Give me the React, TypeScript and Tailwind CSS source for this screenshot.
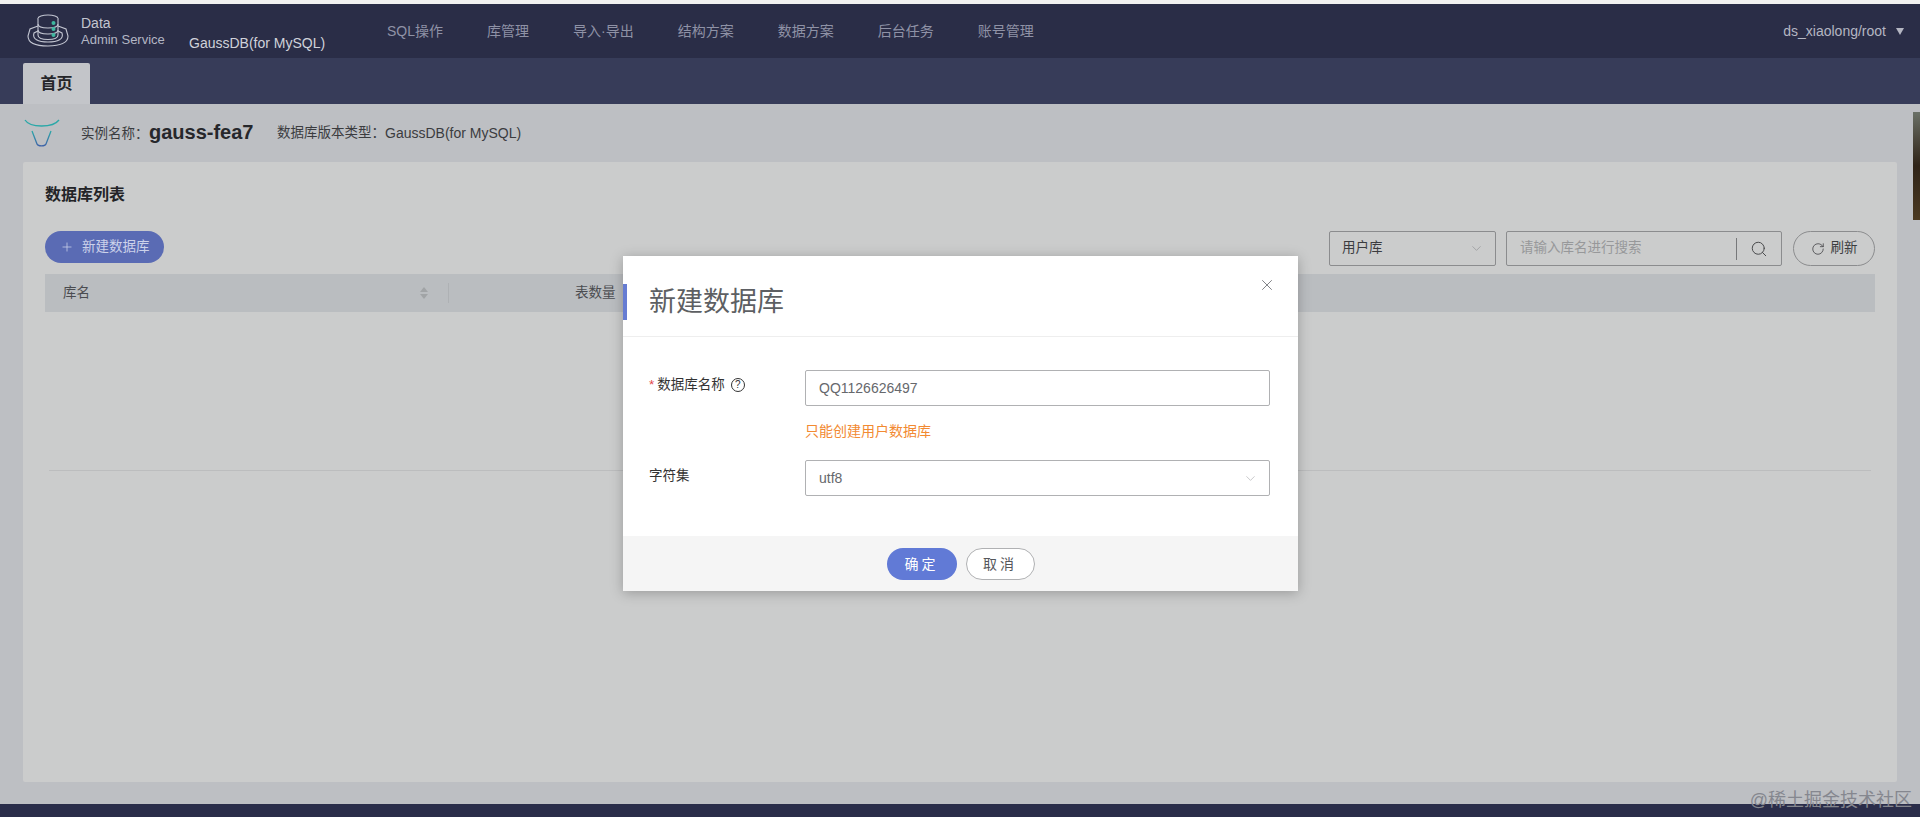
import React from 'react';
import { ChevronDown, Plus, RotateCw, Search, X } from 'lucide-react';

const navItems = ['SQL操作', '库管理', '导入·导出', '结构方案', '数据方案', '后台任务', '账号管理'];

const DbLogo: React.FC = () => (
  <svg width="42" height="34" viewBox="0 0 42 34" fill="none" stroke="#c3c6d2" strokeWidth="1.1">
    <path d="M11 12 L3 15 L1 22 C1 29 9 32 21 32 C33 32 41 29 41 22 L39 15 L31 12" />
    <path d="M11 17 L7 19 C5 25 11 28 21 28 C31 28 37 25 35 19 L31 17" />
    <ellipse cx="21" cy="4.5" rx="10" ry="3.5" fill="#2a2d47" />
    <path d="M11 4.5 V21 C11 24 15 25.5 21 25.5 C27 25.5 31 24 31 21 V4.5" fill="#2a2d47" />
    <path d="M11 10 C11 13 15 14 21 14 C27 14 31 13 31 10" />
    <path d="M11 16 C11 19 15 20 21 20 C27 20 31 19 31 16" />
    <circle cx="26.5" cy="9" r="2" fill="#3fb8a0" stroke="none" />
    <circle cx="26.5" cy="15" r="2" fill="#3fb8a0" stroke="none" />
    <circle cx="26.5" cy="21" r="2" fill="#3fb8a0" stroke="none" />
  </svg>
);

const BullLogo: React.FC = () => (
  <svg width="36" height="28" viewBox="0 0 36 28" fill="none" strokeWidth="1.3">
    <defs>
      <linearGradient id="bull" x1="0" y1="0" x2="0" y2="1">
        <stop offset="0" stopColor="#2aa8a8" />
        <stop offset="1" stopColor="#3f63a8" />
      </linearGradient>
    </defs>
    <path d="M1 1 C6 9 29 9 35 1" stroke="#2aa8a8" />
    <path d="M8 12 L13 25 C14 27.5 21 27.5 22 25 L27 12" stroke="url(#bull)" />
  </svg>
);

const App: React.FC = () => {
  return (
    <div className="relative flex h-[817px] w-[1920px] flex-col overflow-hidden bg-[#bdbfc3] font-['Liberation_Sans','Noto_Sans_CJK_SC',sans-serif] text-[13px] text-[#3b3c3f]">
      <div className="h-[4px] bg-[#f1f1f1]" />

      {/* top nav */}
      <header className="flex h-[54px] items-center bg-[#2a2d47] pl-[27px] pr-[16px]">
        <DbLogo />
        <div className="ml-[12px] mt-[-1px] w-[108px]">
          <div className="text-[14px] font-medium leading-[17px] text-[#c4c6d0]">Data</div>
          <div className="text-[13px] leading-[15px] text-[#b3b6c4]">Admin Service</div>
        </div>
        <div className="mt-[24px] w-[198px] text-[14px] leading-[16px] text-[#d0d2da]">GaussDB(for MySQL)</div>
        <nav className="flex gap-[44px] text-[14px] text-[#8f92a6]">
          {navItems.map((item) => (
            <span key={item}>{item}</span>
          ))}
        </nav>
        <div className="ml-auto flex items-center gap-[10px] text-[14px] text-[#b4b6c2]">
          <span>ds_xiaolong/root</span>
          <span className="h-0 w-0 border-x-[4.5px] border-t-[7px] border-x-transparent border-t-[#b4b6c2]" />
        </div>
      </header>

      {/* tab bar */}
      <div className="flex h-[46px] items-end bg-[#373c59] pl-[23px]">
        <div className="flex h-[41px] w-[67px] items-center justify-center rounded-t-[2px] bg-[#c3c5c9] text-[16px] font-bold text-[#25262a]">
          首页
        </div>
      </div>

      {/* instance info */}
      <div className="flex h-[58px] items-center pl-[24px]">
        <BullLogo />
        <span className="ml-[21px] mt-[2px] w-[68px] text-[13.5px]">实例名称：</span>
        <span className="mt-[-3px] w-[128px] text-[20px] font-bold text-[#26272b]">gauss-fea7</span>
        <span className="text-[13.5px]">数据库版本类型：</span>
        <span className="text-[14px]">GaussDB(for MySQL)</span>
      </div>

      {/* list card */}
      <main className="mx-[23px] flex h-[620px] flex-col rounded-[2px] bg-[#cbcccc] px-[22px]">
        <h2 className="mt-[23px] text-[16px] font-bold leading-[20px] text-[#232427]">数据库列表</h2>
        <div className="mt-[26px] flex items-start">
          <button className="flex h-[32px] w-[119px] items-center rounded-full bg-[#5a6bb4] pl-[15px] text-[13.5px] text-[#ccd2ea]">
            <Plus size={14} strokeWidth={1.3} className="mr-[8px]" />
            新建数据库
          </button>
          <div className="ml-auto flex h-[35px] w-[167px] items-center justify-between rounded-[2px] border border-[#8b8c8e] pl-[12px] pr-[11px] text-[13.5px]">
            用户库
            <ChevronDown size={15} strokeWidth={1} className="text-[#8b8c8e]" />
          </div>
          <div className="ml-[10px] flex h-[35px] w-[276px] items-center rounded-[2px] border border-[#8b8c8e] pl-[13px] text-[13.5px] text-[#97989a]">
            <span className="flex-1">请输入库名进行搜索</span>
            <span className="h-[22px] w-px bg-[#77787a]" />
            <Search size={18} strokeWidth={1.3} className="mx-[13px] text-[#47484a]" />
          </div>
          <button className="ml-[11px] flex h-[35px] w-[82px] items-center justify-center gap-[6px] rounded-full border border-[#8b8c8e] text-[13.5px]">
            <RotateCw size={14} strokeWidth={1.3} />
            刷新
          </button>
        </div>

        <div className="mt-[8px] flex h-[38px] items-center bg-[#babdc0] pl-[18px] text-[13.5px] text-[#4a4c50]">
          <span className="w-[357px]">库名</span>
          <span className="flex flex-col gap-[2px]">
            <span className="h-0 w-0 border-x-[4px] border-b-[5px] border-x-transparent border-b-[#a1a4a6]" />
            <span className="h-0 w-0 border-x-[4px] border-t-[5px] border-x-transparent border-t-[#a1a4a6]" />
          </span>
          <span className="ml-[20px] h-[20px] w-px bg-[#aeb1b4]" />
          <span className="ml-[126px]">表数量</span>
        </div>

        <div className="mx-[4px] mt-[158px] h-px bg-[#bcbdbe]" />
      </main>

      <div className="flex-1" />
      <footer className="h-[13px] bg-[#2a2d4a]" />

      {/* sliver of a photo at the right edge */}
      <div className="absolute right-0 top-[112px] h-[108px] w-[7px] bg-gradient-to-b from-[#6b7168] via-[#2f2418] to-[#4c3a22]" />

      {/* dialog */}
      <div className="absolute left-[623px] top-[256px] flex h-[335px] w-[675px] flex-col bg-white shadow-[0_2px_12px_rgba(0,0,0,0.25)]">
        <div className="relative flex h-[81px] items-center border-b border-[#eeeeee] pl-[26px] pt-[11px]">
          <span className="absolute left-0 top-[28px] h-[36px] w-[4px] bg-[#667cd2]" />
          <span className="text-[27px] leading-[32px] text-[#5d5f63]">新建数据库</span>
          <X size={18} strokeWidth={1.2} className="absolute right-[22px] top-[20px] text-[#74767a]" />
        </div>

        <div className="flex-1 pl-[26px] pr-[28px] pt-[33px]">
          <div className="flex">
            <div className="flex h-[30px] w-[156px] items-center text-[13.5px] text-[#333]">
              <span className="mr-[3px] text-[#e2464a]">*</span>
              数据库名称
              <span className="ml-[6px] flex h-[14px] w-[14px] items-center justify-center rounded-full border border-[#333] text-[10px] leading-none">
                ?
              </span>
            </div>
            <div className="flex h-[36px] flex-1 items-center rounded-[2px] border border-[#b0b1b3] pl-[13px] text-[14px] text-[#66686c]">
              QQ1126626497
            </div>
          </div>
          <div className="mb-[19px] ml-[156px] mt-[15px] h-[20px] text-[14px] leading-[20px] text-[#f28a32]">只能创建用户数据库</div>
          <div className="flex">
            <div className="flex h-[32px] w-[156px] items-center text-[13.5px] text-[#333]">字符集</div>
            <div className="flex h-[36px] flex-1 items-center justify-between rounded-[2px] border border-[#b0b1b3] pl-[13px] pr-[11px] text-[14px] text-[#66686c]">
              utf8
              <ChevronDown size={15} strokeWidth={1} className="text-[#a8a9ab]" />
            </div>
          </div>
        </div>

        <div className="flex h-[55px] items-start justify-center gap-[9px] bg-[#f5f5f5] pt-[12px]">
          <button className="h-[32px] w-[70px] rounded-full bg-[#617ad6] text-[14px] tracking-[3px] text-white">确定</button>
          <button className="h-[32px] w-[69px] rounded-full border border-[#b0b1b3] bg-white text-[14px] tracking-[3px] text-[#55575b]">取消</button>
        </div>
      </div>

      {/* watermark */}
      <div className="absolute right-[8px] top-[789px] text-[18px] leading-[22px] text-[#85878f]">@稀土掘金技术社区</div>
    </div>
  );
};

export default App;
